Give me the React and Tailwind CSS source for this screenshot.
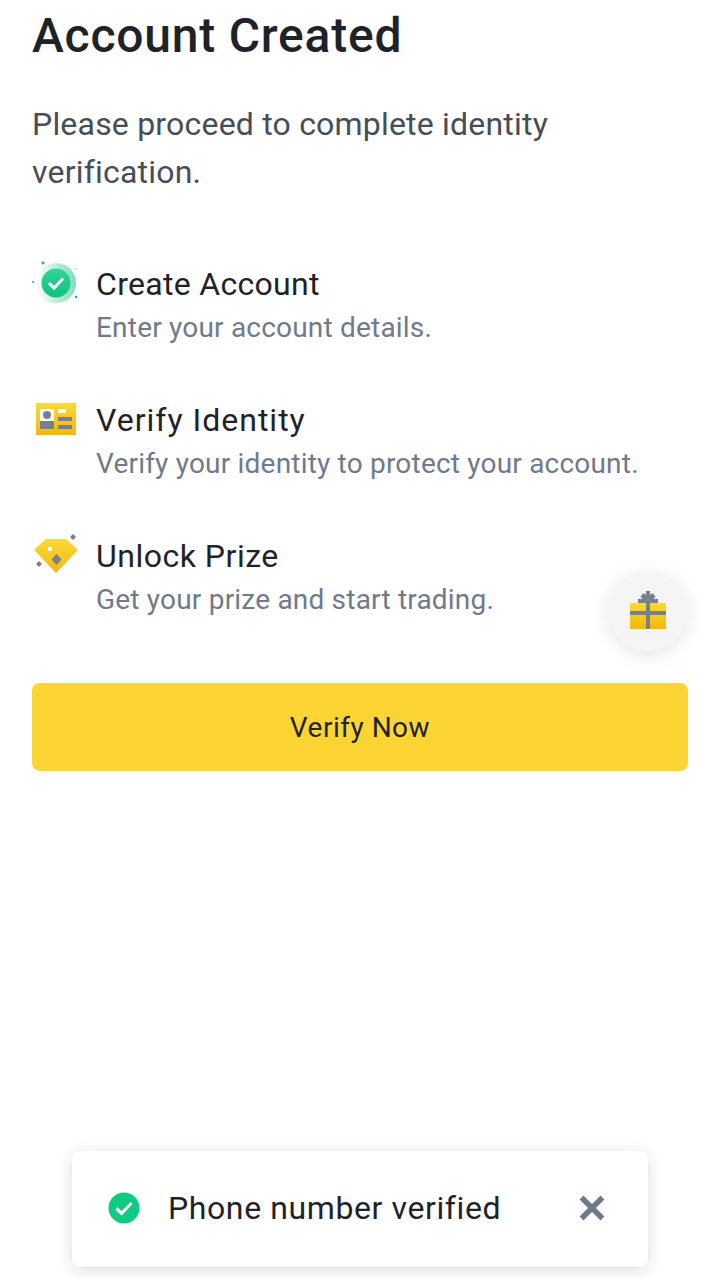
const FONT = "font-['Roboto',sans-serif]";

function Grad({ id, from = '#FDD835', to = '#F0B90B' }) {
  return (
    <linearGradient id={id} x1="0" y1="0" x2="0" y2="1">
      <stop offset="0" stopColor={from} />
      <stop offset="1" stopColor={to} />
    </linearGradient>
  );
}

function CheckIcon() {
  return (
    <svg width="48" height="48" viewBox="0 0 48 48" className="block overflow-visible">
      <defs>
        <linearGradient id="ring" x1="0" y1="0" x2="1" y2="0">
          <stop offset="0" stopColor="#ffffff" />
          <stop offset="1" stopColor="#7fdcb8" />
        </linearGradient>
        <Grad id="gr" from="#34d399" to="#0ec27f" />
      </defs>
      <circle cx="24" cy="24" r="20" fill="url(#ring)" />
      <circle cx="24" cy="24" r="14.500" fill="url(#gr)" />
      <path d="M17 24l5 5 9-9.500" fill="none" stroke="#fff" strokeWidth="3" />
      <circle cx="11" cy="4" r="1.500" fill="#12b981" />
      <circle cx="1" cy="23" r="1" fill="#12b981" />
      <circle cx="44" cy="10" r="1" fill="#a8e6cf" />
      <circle cx="44" cy="38" r="1.200" fill="#12b981" />
    </svg>
  );
}

function IdIcon() {
  return (
    <svg width="48" height="48" viewBox="0 0 48 48" className="block">
      <defs><Grad id="idg" /></defs>
      <rect x="4" y="3" width="40" height="32" fill="url(#idg)" />
      <rect x="8" y="9" width="14" height="20" fill="#fff" />
      <circle cx="15" cy="15" r="4" fill="#76808F" />
      <rect x="8" y="21" width="14" height="8" fill="#76808F" />
      <rect x="26" y="9" width="8" height="4" fill="#fff" />
      <rect x="26" y="17" width="14" height="4" fill="#76808F" />
      <rect x="26" y="25" width="14" height="4" fill="#76808F" />
    </svg>
  );
}

function GemIcon() {
  return (
    <svg width="48" height="48" viewBox="0 0 48 48" className="block overflow-visible">
      <defs><Grad id="gem" /></defs>
      <path d="M14 3H34L46 14 24 37 2 14Z" fill="url(#gem)" />
      <rect x="16" y="11" width="4" height="4" fill="#fff" />
      <path d="M24.500 18l5 5.500-5 5.500-5-5.500Z" fill="#76808F" />
      <path d="M41 -2l3 3-3 3-3-3Z" fill="#76808F" />
      <path d="M7 25l3 3-3 3-3-3Z" fill="#76808F" />
    </svg>
  );
}

function GiftIcon() {
  return (
    <svg width="36" height="40" viewBox="0 0 36 40" className="block">
      <defs><Grad id="gift" /></defs>
      <rect x="0" y="12" width="36" height="26" fill="url(#gift)" />
      <rect x="8" y="8" width="20" height="4" fill="#76808F" />
      <path d="M18 9L12 4M18 9L24 4" stroke="#76808F" strokeWidth="5" fill="none" />
      <rect x="16" y="0" width="4" height="38" fill="#76808F" />
      <rect x="0" y="20" width="36" height="4" fill="#76808F" />
    </svg>
  );
}

function Step({ icon, iconClass, title, titleClass, desc }) {
  return (
    <div className="flex">
      <div className={`w-[48px] h-[48px] mr-4 shrink-0 ${iconClass}`}>{icon}</div>
      <div className="flex flex-col">
        <div className={`text-[32px] leading-[40px] font-normal text-[#1E2329] mt-[8px] ${titleClass}`}>{title}</div>
        <div className="text-[28px] leading-[44px] text-[#707A8A] tracking-[0.2px] mt-[2px]">{desc}</div>
      </div>
    </div>
  );
}

export default function App() {
  return (
    <div className={`${FONT} relative w-[720px] h-[1278px] bg-white overflow-hidden px-8 pt-[8px]`}>
      <h1 className="text-[48px] leading-[56px] font-medium tracking-[0.77px] text-[#1E2329]">Account Created</h1>
      <p className="mt-[36px] text-[32px] leading-[48px] tracking-[0.2px] text-[#474D57]">
        Please proceed to complete identity<br />verification.
      </p>
      <div className="mt-[60px] flex flex-col gap-[42px]">
        <Step icon={<CheckIcon />} iconClass="mt-[3px]" titleClass="tracking-[0.3px]" title="Create Account" desc="Enter your account details." />
        <Step icon={<IdIcon />} iconClass="mt-[8px]" titleClass="tracking-[1px]" title="Verify Identity" desc="Verify your identity to protect your account." />
        <Step icon={<GemIcon />} iconClass="mt-[8px]" titleClass="tracking-[0.5px]" title="Unlock Prize" desc="Get your prize and start trading." />
      </div>
      <button className="mt-[61px] w-full h-[88px] rounded-lg bg-[#FCD535] text-[28px] font-normal text-[#1E2329] tracking-[0.5px] pt-[1px]">
        Verify Now
      </button>

      <div className="absolute left-[608px] top-[571px] w-[80px] h-[80px] rounded-full bg-[#F5F5F5] shadow-[0_4px_20px_rgba(0,0,0,0.1)] flex items-center justify-center">
        <GiftIcon />
      </div>

      <div className="absolute left-[72px] top-[1151px] w-[576px] h-[116px] rounded-lg bg-white shadow-[0_3px_16px_rgba(0,0,0,0.14)] flex items-center pl-[36px] pr-[42px] pb-[3px]">
        <svg width="32" height="32" viewBox="0 0 32 32" className="shrink-0">
          <circle cx="16" cy="16" r="15.500" fill="#0ECB81" />
          <path d="M8.500 16.500l5 5 10-10.500" fill="none" stroke="#fff" strokeWidth="3.200" />
        </svg>
        <span className="ml-[28px] text-[32px] tracking-[0.6px] text-[#1E2329]">Phone number verified</span>
        <svg width="28" height="28" viewBox="0 0 28 28" className="ml-auto shrink-0">
          <path d="M3.500 3.500L24.500 24.500M24.500 3.500L3.500 24.500" stroke="#707A8A" strokeWidth="5.500" fill="none" />
        </svg>
      </div>
    </div>
  );
}
